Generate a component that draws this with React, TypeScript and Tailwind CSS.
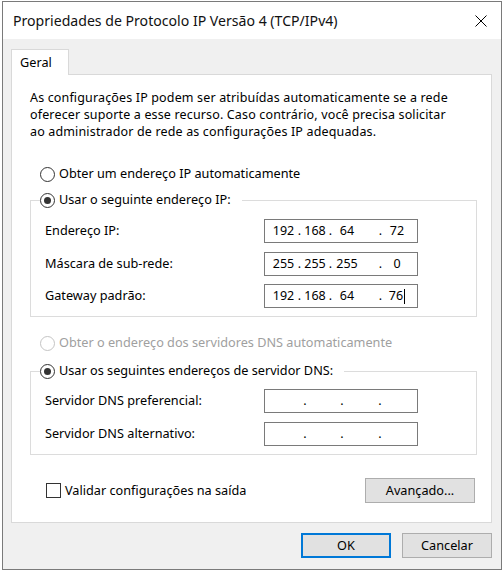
import React from "react";

const font = { fontFamily: '"Noto Sans", "Open Sans", sans-serif' };

function Radio({ checked, disabled }: { checked?: boolean; disabled?: boolean }) {
  return (
    <span
      className={`w-[15px] h-[15px] rounded-full border bg-white flex items-center justify-center shrink-0 ${
        disabled ? "border-[#c4c4c4]" : "border-[#333333]"
      }`}
    >
      {checked && <span className="w-[7px] h-[7px] rounded-full bg-[#333333]" />}
    </span>
  );
}

function IpFilled({ parts, caret }: { parts: string[]; caret?: boolean }) {
  return (
    <div className="w-[154px] h-[24px] border border-[#7a7a7a] bg-white flex items-center text-[12.5px] text-black leading-none">
      <span className="w-[4px]" />
      <span className="w-[29px] text-center">{parts[0]}</span>
      <span className="w-[3px] flex justify-center">.</span>
      <span className="w-[28px] text-center">{parts[1]}</span>
      <span className="w-[3px] flex justify-center">.</span>
      <span className="w-[30px] text-center">{parts[2]}</span>
      <span className="w-[17px]" />
      <span className="w-[3px] flex justify-center">.</span>
      <span className="w-[30px] flex justify-center items-center">
        <span>{parts[3]}</span>
        {caret && <span className="w-[1px] h-[15px] bg-black ml-[1px]" />}
      </span>
    </div>
  );
}

function IpEmpty() {
  return (
    <div className="w-[154px] h-[24px] border border-[#7a7a7a] bg-white flex items-center text-[12.5px] text-black leading-none">
      <span className="w-[4px]" />
      <span className="w-[34px]" />
      <span className="w-[4px] flex justify-center">.</span>
      <span className="w-[33px]" />
      <span className="w-[4px] flex justify-center">.</span>
      <span className="w-[34px]" />
      <span className="w-[4px] flex justify-center">.</span>
    </div>
  );
}

function Row({ label, children, className = "" }: { label: string; children: React.ReactNode; className?: string }) {
  return (
    <div className={`flex items-center h-[24px] ml-[5px] ${className}`}>
      <span className="w-[219px] text-black">{label}</span>
      {children}
    </div>
  );
}

function Button({ children, primary, className = "" }: { children: React.ReactNode; primary?: boolean; className?: string }) {
  return (
    <button
      className={`h-[25px] bg-[#e1e1e1] text-[12.7px] text-black flex items-center justify-center ${
        primary ? "border-2 border-[#0078d7]" : "border border-[#adadad]"
      } ${className}`}
    >
      {children}
    </button>
  );
}

export default function App() {
  return (
    <div className="w-[504px] h-[573px] bg-white pt-[1px] pl-[2px]" style={font}>
      <div className="w-[500px] h-[569px] border border-[#7a7a7a] flex flex-col">
        {/* Title bar */}
        <div className="h-[37px] bg-white flex items-center justify-between pl-[10px] pr-[14px] shrink-0">
          <span className="text-[14.1px] text-[#111]">Propriedades de Protocolo IP Versão 4 (TCP/IPv4)</span>
          <svg width="12" height="12" viewBox="0 0 12 12" className="mt-[1px]">
            <path d="M0.5 0.5 L11.5 11.5 M11.5 0.5 L0.5 11.5" stroke="#000" strokeWidth="1" />
          </svg>
        </div>

        {/* Body */}
        <div className="flex-1 bg-[#f0f0f0] pt-[10px] pl-[8px] pr-[9px] flex flex-col">
          {/* Tab */}
          <div className="w-[58px] h-[26px] bg-white border-t border-l border-r border-[#d9d9d9] -mb-[1px] relative z-10 pl-[8px] flex items-center text-[12.7px] text-black">
            Geral
          </div>

          {/* Panel */}
          <div className="w-[481px] h-[449px] bg-white border border-[#d9d9d9] pt-[14px] pl-[18px] flex flex-col text-[12.7px] text-black">
            <p className="text-[12.5px] leading-[17px] tracking-[0.15px] whitespace-nowrap">
              As configurações IP podem ser atribuídas automaticamente se a rede
              <br />
              oferecer suporte a esse recurso. Caso contrário, você precisa solicitar
              <br />
              ao administrador de rede as configurações IP adequadas.
            </p>

            <label className="flex items-center h-[20px] mt-[24px] ml-[10px]">
              <Radio />
              <span className="ml-[4px]">Obter um endereço IP automaticamente</span>
            </label>

            <fieldset className="w-[447px] mt-[6px] border border-[#dcdcdc] pl-[9px] pb-[8px]">
              <legend className="h-[20px] flex items-center pr-[11px]">
                <Radio checked />
                <span className="ml-[4px]">Usar o seguinte endereço IP:</span>
              </legend>
              <Row label="Endereço IP:" className="mt-[9px]">
                <IpFilled parts={["192", "168", "64", "72"]} />
              </Row>
              <Row label="Máscara de sub-rede:" className="mt-[9px]">
                <IpFilled parts={["255", "255", "255", "0"]} />
              </Row>
              <Row label="Gateway padrão:" className="mt-[8px]">
                <IpFilled parts={["192", "168", "64", "76"]} caret />
              </Row>
            </fieldset>

            <label className="flex items-center h-[20px] mt-[16px] ml-[10px] text-[#a0a0a0]">
              <Radio disabled />
              <span className="ml-[4px]">Obter o endereço dos servidores DNS automaticamente</span>
            </label>

            <fieldset className="w-[447px] mt-[8px] border border-[#dcdcdc] pl-[9px] pb-[8px]">
              <legend className="h-[20px] flex items-center pr-[11px]">
                <Radio checked />
                <span className="ml-[4px]">Usar os seguintes endereços de servidor DNS:</span>
              </legend>
              <Row label="Servidor DNS preferencial:" className="mt-[8px]">
                <IpEmpty />
              </Row>
              <Row label="Servidor DNS alternativo:" className="mt-[9px]">
                <IpEmpty />
              </Row>
            </fieldset>

            <div className="flex items-center justify-between h-[25px] mt-[23px] mr-[16px]">
              <label className="flex items-center ml-[16px]">
                <span className="w-[15px] h-[15px] border border-[#333333] bg-white shrink-0" />
                <span className="ml-[4px]">Validar configurações na saída</span>
              </label>
              <Button className="w-[110px]">Avançado...</Button>
            </div>
          </div>

          {/* Dialog buttons */}
          <div className="flex justify-end gap-[11px] mt-[10px]">
            <Button primary className="w-[90px]">OK</Button>
            <Button className="w-[90px]">Cancelar</Button>
          </div>
        </div>
      </div>
    </div>
  );
}
